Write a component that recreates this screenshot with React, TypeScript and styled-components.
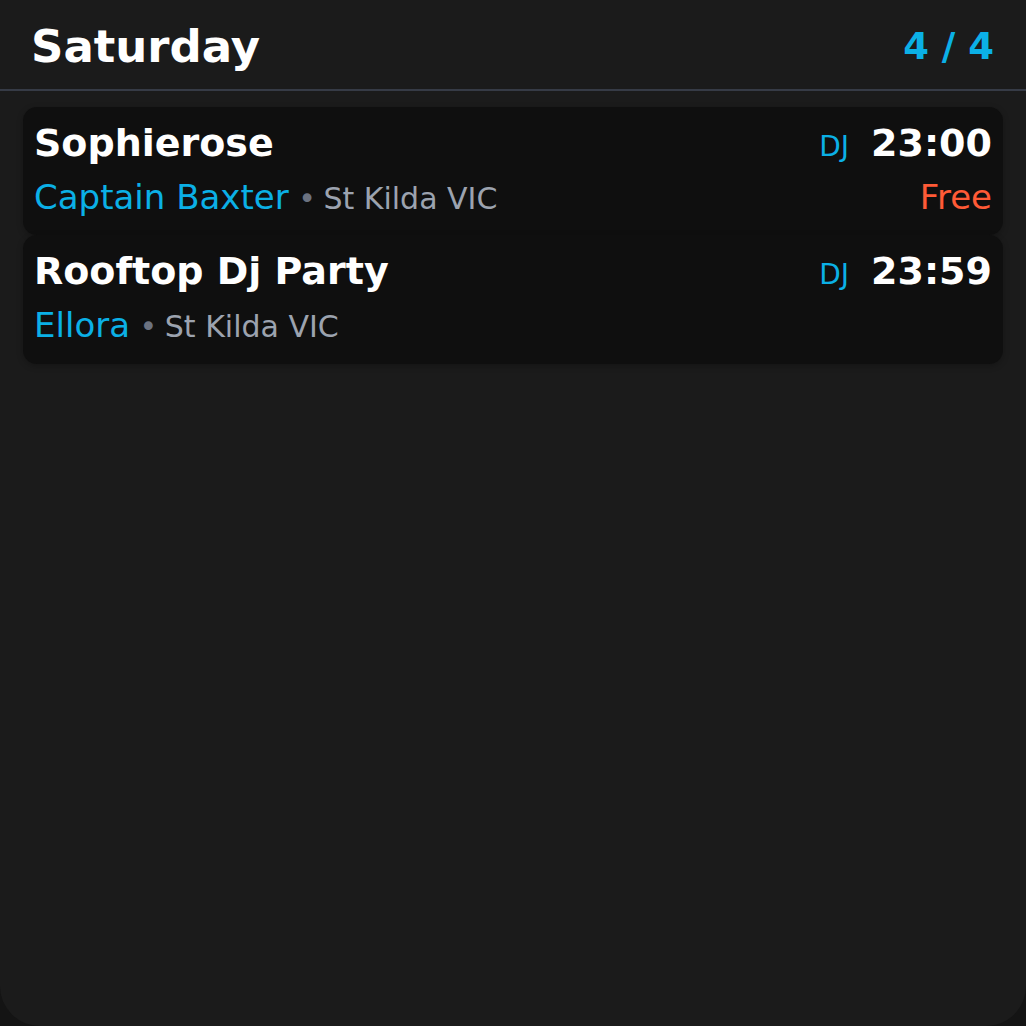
import React from "react";
import styled, { createGlobalStyle } from "styled-components";

interface EventItem {
  title: string;
  venue: string;
  location: string;
  tag: string;
  time: string;
  price?: string;
}

const events: EventItem[] = [
  {
    title: "Sophierose",
    venue: "Captain Baxter",
    location: "St Kilda VIC",
    tag: "DJ",
    time: "23:00",
    price: "Free",
  },
  {
    title: "Rooftop Dj Party",
    venue: "Ellora",
    location: "St Kilda VIC",
    tag: "DJ",
    time: "23:59",
  },
];

const GlobalStyle = createGlobalStyle`
  html, body {
    margin: 0;
    padding: 0;
    background: #141414;
  }
  body {
    font-family: "DejaVu Sans", "Liberation Sans", sans-serif;
  }
`;

const Screen = styled.div`
  min-height: 1026px;
  background: #1b1b1b;
  border-radius: 0 0 40px 40px;
  box-sizing: border-box;
  overflow: hidden;
`;

const Header = styled.header`
  display: flex;
  align-items: center;
  justify-content: space-between;
  padding: 20px 32px 15px 31px;
  border-bottom: 2px solid #363b46;
`;

const DayTitle = styled.h1`
  margin: 0;
  font-size: 45px;
  line-height: 1.2;
  font-weight: bold;
  color: #ffffff;
`;

const Counter = styled.span`
  font-size: 37px;
  line-height: 1.2;
  font-weight: bold;
  color: #0bb0e6;
`;

const List = styled.div`
  display: flex;
  flex-direction: column;
  gap: 0;
  padding: 16px 23px;
`;

const Card = styled.div`
  display: flex;
  flex-direction: column;
  gap: 10px;
  padding: 14px 11px 18px 11px;
  background: #0f0f0f;
  border-radius: 14px;
  box-shadow: 0 2px 6px rgba(0, 0, 0, 0.25);
`;

const Row = styled.div`
  display: flex;
  align-items: baseline;
  justify-content: space-between;
  gap: 16px;
`;

const Title = styled.div`
  font-size: 38px;
  line-height: 1.2;
  font-weight: bold;
  color: #ffffff;
`;

const TimeGroup = styled.div`
  display: flex;
  align-items: baseline;
  gap: 22px;
`;

const Tag = styled.span`
  font-size: 28px;
  color: #0bb0e6;
`;

const Time = styled.span`
  font-size: 38px;
  line-height: 1.2;
  font-weight: bold;
  color: #ffffff;
`;

const Venue = styled.div`
  font-size: 34px;
  line-height: 1.2;
  color: #0bb0e6;
`;

const Location = styled.span`
  font-size: 30px;
  color: #9ca3af;
`;

const Dot = styled.span`
  color: #6b7280;
  margin-right: -2px;
`;

const Price = styled.span`
  font-size: 34px;
  line-height: 1.2;
  color: #ff5a36;
`;

const EventCard: React.FC<{ item: EventItem }> = ({ item }) => (
  <Card>
    <Row>
      <Title>{item.title}</Title>
      <TimeGroup>
        <Tag>{item.tag}</Tag>
        <Time>{item.time}</Time>
      </TimeGroup>
    </Row>
    <Row>
      <Venue>
        {item.venue}
        <Location>
          {" "}
          <Dot>•</Dot> {item.location}
        </Location>
      </Venue>
      {item.price && <Price>{item.price}</Price>}
    </Row>
  </Card>
);

export default function App() {
  return (
    <>
      <GlobalStyle />
      <Screen>
        <Header>
          <DayTitle>Saturday</DayTitle>
          <Counter>4 / 4</Counter>
        </Header>
        <List>
          {events.map((e) => (
            <EventCard key={e.title} item={e} />
          ))}
        </List>
      </Screen>
    </>
  );
}
